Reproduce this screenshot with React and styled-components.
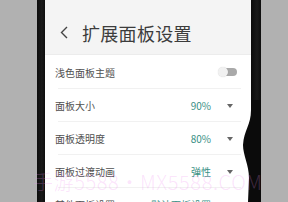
import React from "react";
import styled, { createGlobalStyle } from "styled-components";

const Global = createGlobalStyle`
  html, body { margin: 0; padding: 0; }
  body {
    width: 288px; height: 202px; overflow: hidden;
    background: #b1b1b1;
    font-family: "Noto Sans CJK SC", "Noto Sans", sans-serif;
  }
`;

const Stage = styled.div`
  position: relative;
  width: 288px;
  height: 202px;
  display: flex;
  overflow: hidden;
  background: #b1b1b1;
`;

const Gutter = styled.div`
  width: ${(p) => p.$w}px;
  flex: none;
`;

const Bezel = styled.div`
  width: ${(p) => p.$w}px;
  flex: none;
  background: linear-gradient(90deg, #0c0c0c, #1a1a1a 60%, #0e0e0e);
`;

const Screen = styled.div`
  width: 206px;
  flex: none;
  display: flex;
  flex-direction: column;
  background: #f4f4f4;
`;

const Header = styled.div`
  height: 55px;
  flex: none;
  display: flex;
  align-items: center;
  padding: 10px 0 0 15px;
  box-sizing: border-box;
  gap: 14px;
`;

const Title = styled.div`
  font-size: 18px;
  color: #3c3c3c;
  letter-spacing: 0.3px;
`;

const Card = styled.div`
  flex: 1;
  background: #fff;
  display: flex;
  flex-direction: column;
  box-shadow: 0 -1px 0 #ececec;
`;

const Row = styled.div`
  height: ${(p) => p.$h}px;
  flex: none;
  display: flex;
  align-items: center;
  padding: 0 18px 0 10px;
  box-sizing: border-box;
  position: relative;
  &::after {
    content: "";
    position: absolute;
    left: 13px;
    right: 10px;
    bottom: 0;
    height: 1px;
    background: #f1f1f1;
  }
`;

const Label = styled.div`
  flex: 1;
  font-size: 10px;
  color: #505050;
`;

const Value = styled.div`
  font-size: 10px;
  color: #3a9086;
  margin-right: 16px;
`;

const Caret = styled.div`
  width: 0;
  height: 0;
  border-left: 3px solid transparent;
  border-right: 3px solid transparent;
  border-top: 4px solid #666;
`;

const Toggle = styled.div`
  position: relative;
  width: 19px;
  height: 10px;
  margin-right: -4px;
`;

const Track = styled.div`
  position: absolute;
  left: 5px;
  top: 1px;
  width: 14px;
  height: 8px;
  border-radius: 4px;
  background: #a9a9a9;
`;

const Knob = styled.div`
  position: absolute;
  left: 0;
  top: 0;
  width: 10px;
  height: 10px;
  border-radius: 50%;
  background: #f1f1f1;
  box-shadow: 0 0 1px rgba(0, 0, 0, 0.2);
`;

const Watermark = styled.div`
  position: absolute;
  left: 33px;
  top: 171px;
  font-family: "Noto Sans CJK SC", "Noto Sans", sans-serif;
  font-weight: 300;
  font-size: 20px;
  letter-spacing: 0.6px;
  line-height: 22px;
  color: rgba(240, 140, 240, 0.24);
  white-space: nowrap;
  pointer-events: none;
`;

const Curve = styled.svg`
  position: absolute;
  left: 240px;
  top: 100px;
  pointer-events: none;
`;

const rows = [
  { label: "面板大小", value: "90%" },
  { label: "面板透明度", value: "80%" },
  { label: "面板过渡动画", value: "弹性" },
  { label: "其他面板设置", value: "默认面板设置" },
];

export default function App() {
  return (
    <>
      <Global />
      <Stage>
        <Gutter $w={37} />
        <Bezel $w={8} />
        <Screen>
          <Header>
            <svg width="8" height="13" viewBox="0 0 8 13">
              <path d="M7 1 L1.5 6.5 L7 12" fill="none" stroke="#444" strokeWidth="1.4" />
            </svg>
            <Title>扩展面板设置</Title>
          </Header>
          <Card>
            <Row $h={34}>
              <Label>浅色面板主题</Label>
              <Toggle>
                <Track />
                <Knob />
              </Toggle>
            </Row>
            {rows.map((r) => (
              <Row $h={33} key={r.label}>
                <Label>{r.label}</Label>
                <Value>{r.value}</Value>
                <Caret />
              </Row>
            ))}
          </Card>
        </Screen>
        <Bezel $w={10} />
        <Gutter $w={27} />
        <Curve width="21" height="102" viewBox="0 0 21 102">
          <path d="M11 10 C11 25 4 30 3 45 C3 55 9 65 9 78 L8 102 L21 102 L21 0 L11 0 Z" fill="#0b0b0b" />
        </Curve>
        <Watermark>手游5588・MX5588.COM</Watermark>
      </Stage>
    </>
  );
}
